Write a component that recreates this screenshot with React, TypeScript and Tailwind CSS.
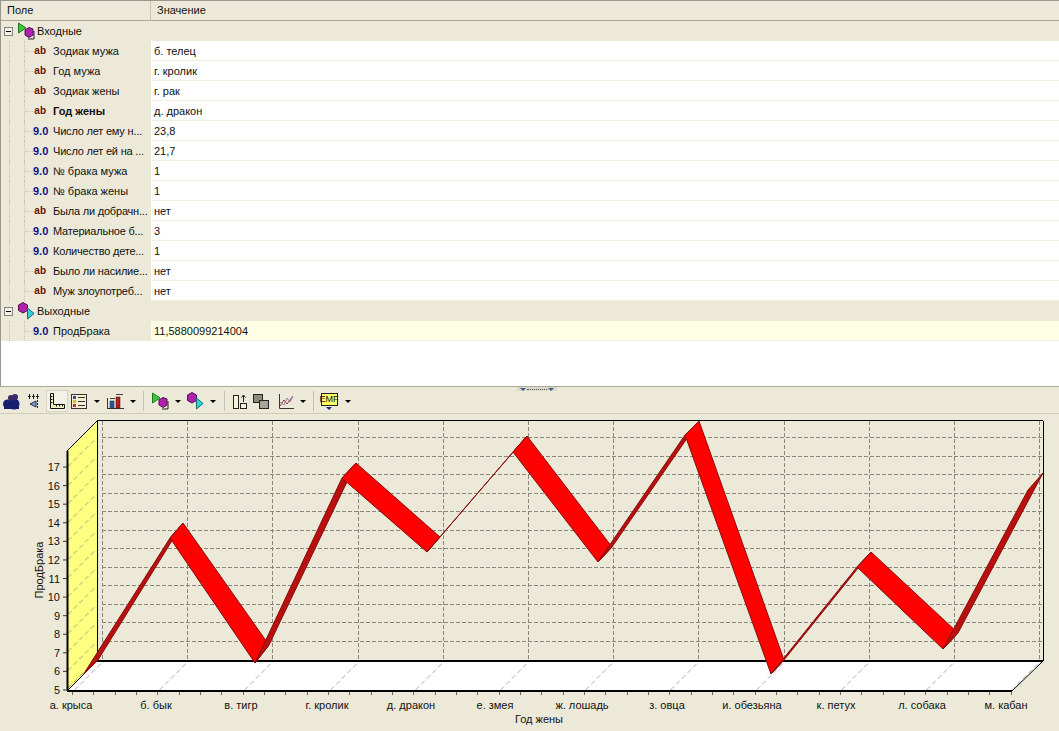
const INPUTS: [string, string, string, boolean?][] = [
  ['ab', 'Зодиак мужа', 'б. телец'],
  ['ab', 'Год мужа', 'г. кролик'],
  ['ab', 'Зодиак жены', 'г. рак'],
  ['ab', 'Год жены', 'д. дракон', true],
  ['9.0', 'Число лет ему н...', '23,8'],
  ['9.0', 'Число лет ей на ...', '21,7'],
  ['9.0', '№ брака мужа', '1'],
  ['9.0', '№ брака жены', '1'],
  ['ab', 'Была ли добрачн...', 'нет'],
  ['9.0', 'Материальное б...', '3'],
  ['9.0', 'Количество дете...', '1'],
  ['ab', 'Было ли насилие...', 'нет'],
  ['ab', 'Муж злоупотреб...', 'нет'],
];

// front and back edge of the ribbon at each category
const RIBBON = [
  [83, 675, 98, 660],
  [170, 538, 183, 523],
  [255, 663, 269, 645],
  [342, 478, 356, 463],
  [427, 552, 440, 537],
  [513, 452, 527, 436],
  [598, 562, 612, 547],
  [685, 435, 699, 421],
  [771, 674, 784, 660],
  [857, 567, 871, 552],
  [943, 649, 958, 633],
  [1028, 490, 1043, 473],
];

const LABELS: [string, number][] = [
  ['а. крыса', 71],
  ['б. бык', 156],
  ['в. тигр', 241],
  ['г. кролик', 327],
  ['д. дракон', 411],
  ['е. змея', 495],
  ['ж. лошадь', 582],
  ['з. овца', 667],
  ['и. обезьяна', 752],
  ['к. петух', 836],
  ['л. собака', 922],
  ['м. кабан', 1006],
];

const GRID_Y = Array.from({ length: 12 }, (_, i) => Math.round(437 + i * 18.5) + 0.5);
const GRID_X = Array.from({ length: 12 }, (_, i) => Math.round(102 + i * 85.2) + 0.5);
const TICKS_X = Array.from({ length: 45 }, (_, i) => Math.round(72 + i * 21.33) + 0.5);
const Y_LABELS = Array.from({ length: 13 }, (_, i) => 5 + i);

function InputsIcon() {
  return (
    <svg width="18" height="18" viewBox="0 0 18 18" className="shrink-0">
      <polygon points="1.500,1 1.500,11 9,6" fill="#3fc83f" stroke="#1c7a1c" />
      <polygon points="8,8 12,5.500 16,7 16,13 12,15.500 8,13" fill="#b021b0" stroke="#501050" />
      <path d="M17 9v8h-6" fill="none" stroke="#222" />
    </svg>
  );
}

function OutputsIcon() {
  return (
    <svg width="18" height="18" viewBox="0 0 18 18" className="shrink-0">
      <polygon points="1.500,3 6,0.500 10.500,3 10.500,8.500 6,11 1.500,8.500" fill="#b021b0" stroke="#501050" />
      <polygon points="10.500,6 10.500,17 17,11.500" fill="#35d0d0" stroke="#107070" />
    </svg>
  );
}

function Minus() {
  return (
    <div className="ml-[3px] flex h-[9px] w-[9px] shrink-0 items-center justify-center border border-[#808080] bg-[#f4f2e8]">
      <div className="h-px w-[5px] bg-black" />
    </div>
  );
}

function GroupRow({ title, icon }: { title: string; icon: React.ReactNode }) {
  return (
    <div className="flex h-5 items-center bg-[#ece9d8]">
      <Minus />
      <div className="ml-1">{icon}</div>
      <span className="ml-[2px]">{title}</span>
    </div>
  );
}

function FieldRow({ type, name, value, bold, bg }: { type: string; name: string; value: string; bold?: boolean; bg?: string }) {
  // the clipped names sit a little tighter so they stop short of the value column
  const nameClass = bold
    ? 'ml-[5px] font-bold whitespace-nowrap'
    : name.endsWith('...')
      ? 'ml-[5px] tracking-[-0.2px] whitespace-nowrap'
      : 'ml-[5px] whitespace-nowrap';
  return (
    <div className="flex h-5">
      <div className="flex w-[150px] shrink-0 items-center bg-[#ece9d8]">
        <div className="ml-[8px] h-full border-l border-dotted border-[#c4c1ae]" />
        <div className="ml-[14px] h-full border-l border-dotted border-[#c4c1ae]" />
        <div className="w-[8px] border-t border-dotted border-[#c4c1ae]" />
        <span
          className={
            type === 'ab'
              ? 'w-[15px] pr-[2px] text-right text-[10px] font-bold text-[#6e0c0c]'
              : 'w-[15px] text-right font-bold text-[#12128c]'
          }
        >
          {type}
        </span>
        <span className={nameClass}>{name}</span>
      </div>
      <div className={`flex flex-1 items-center pl-[3px] shadow-[inset_0_-1px_0_#f1efe2] ${bg ?? 'bg-white'}`}>{value}</div>
    </div>
  );
}

function Arrow() {
  return <div className="h-0 w-0 border-x-[3px] border-t-[3px] border-x-transparent border-t-black" />;
}

function Sep({ className }: { className: string }) {
  return <div className={`h-[20px] w-px bg-[#c5c2b0] ${className}`} />;
}

function Btn({ className, children }: { className: string; children: React.ReactNode }) {
  return <div className={`flex h-[22px] shrink-0 items-center justify-center ${className}`}>{children}</div>;
}

function Toolbar() {
  return (
    <div className="flex h-[25px] items-center border-b border-[#d0cdbb] bg-[#ece9d8]">
      <Btn className="w-[23px]">
        <svg width="17" height="17" viewBox="0 0 17 17" fill="#16206e">
          <circle cx="4.500" cy="11" r="4.500" />
          <circle cx="11" cy="11" r="5.500" />
          <circle cx="8" cy="5" r="3" fill="#3a2a6a" />
          <circle cx="12" cy="4" r="3" fill="#3a2a6a" />
          <rect x="1" y="11" width="15" height="5" />
        </svg>
      </Btn>
      <Btn className="w-[22px]">
        <svg width="14" height="16" viewBox="0 0 14 16" fill="none" stroke="#222">
          <path d="M2.500 1v5M6.500 1v5M10.500 1v14" strokeDasharray="2 1" />
          <path d="M1 3.500h3M5 3.500h3M9 3.500h3" />
          <polygon points="9,8 9,14 3,11" fill="#8aa0c8" stroke="#1c2a60" />
        </svg>
      </Btn>
      <Btn className="ml-px w-[22px] border border-[#d6d3c2] bg-[#f4f2e8]">
        <svg width="16" height="16" viewBox="0 0 16 16" fill="none" stroke="#111">
          <path d="M1.500 0.500h3v11h11v4h-14z" fill="#f2efc4" />
          <path d="M7.500 11.500v2M10.500 11.500v2M13.500 11.500v2M1.500 3.500h2M1.500 6.500h2M1.500 9.500h2" />
        </svg>
      </Btn>
      <Btn className="w-[22px]">
        <svg width="16" height="15" viewBox="0 0 16 15" fill="none" stroke="#333">
          <rect x="0.500" y="0.500" width="15" height="14" fill="#f3eed0" />
          <path d="M2 2h3v3H2z" fill="#3a4aa0" stroke="none" />
          <path d="M2 6h3v3H2z" fill="#d8c030" stroke="none" />
          <path d="M2 10h3v3H2z" fill="#c03030" stroke="none" />
          <path d="M7 3.500h7M7 7.500h7M7 11.500h7" />
        </svg>
      </Btn>
      <Btn className="w-[14px]"><Arrow /></Btn>
      <Btn className="w-[22px]">
        <svg width="17" height="16" viewBox="0 0 17 16">
          <path d="M0.500 15.500V5" stroke="#333" fill="none" />
          <path d="M0 15.500h17" stroke="#333" />
          <rect x="3" y="8" width="4" height="7" fill="#2a58a8" stroke="#123" strokeWidth="0.500" />
          <rect x="9" y="4" width="4" height="11" fill="#b52020" stroke="#411" strokeWidth="0.500" />
          <path d="M3 5.500h5M9 1.500h7" stroke="#444" fill="none" />
        </svg>
      </Btn>
      <Btn className="w-[14px]"><Arrow /></Btn>
      <Sep className="ml-[3px]" />
      <Btn className="ml-[5px] w-[22px]"><InputsIcon /></Btn>
      <Btn className="w-[14px]"><Arrow /></Btn>
      <Btn className="w-[20px]"><OutputsIcon /></Btn>
      <Btn className="ml-px w-[14px]"><Arrow /></Btn>
      <Sep className="ml-[4px]" />
      <Btn className="ml-[4px] w-[22px]">
        <svg width="14" height="15" viewBox="0 0 14 15" fill="none" stroke="#222">
          <rect x="0.500" y="1.500" width="5" height="13" fill="#f5f2dc" />
          <rect x="7.500" y="9.500" width="6" height="5" fill="#f5f2dc" />
          <path d="M10.500 8V1M8.500 3.500l2-2.500 2 2.500" />
        </svg>
      </Btn>
      <Btn className="w-[20px]">
        <svg width="16" height="15" viewBox="0 0 16 15" stroke="#222">
          <rect x="0.500" y="0.500" width="9" height="8" fill="#8c8a78" />
          <rect x="6.500" y="6.500" width="9" height="8" fill="#a8a692" />
        </svg>
      </Btn>
      <Btn className="ml-[3px] w-[24px]">
        <svg width="15" height="15" viewBox="0 0 15 15" fill="none">
          <path d="M0.500 0v14.500H15" stroke="#333" />
          <path d="M1 12l4-6 3 4 6-8" stroke="#b03030" />
          <path d="M1 8l4 3 3-7 3 4 3-6" stroke="#8a7fb0" />
        </svg>
      </Btn>
      <Btn className="w-[10px]"><Arrow /></Btn>
      <Sep className="ml-[5px]" />
      <Btn className="ml-[4px] w-[22px]">
        <div className="relative -mt-[3px] flex h-[13px] w-[17px] items-center justify-center border border-[#222] bg-[#ffff66] text-[9px] leading-none">
          EMF
          <div className="absolute -bottom-[5px] left-[4px] h-0 w-0 border-x-[3px] border-t-[3px] border-x-transparent border-t-[#222288]" />
        </div>
      </Btn>
      <Btn className="ml-px w-[14px]"><Arrow /></Btn>
    </div>
  );
}

function Chart() {
  return (
    <svg width="1059" height="317" viewBox="0 414 1059 317" className="block" fontFamily="'Liberation Sans', sans-serif" fontSize="11">
      {/* back wall grid */}
      {GRID_Y.map((y) => (
        <line key={y} x1="102" x2="1043" y1={y} y2={y} stroke="#8a887c" strokeDasharray="4 2" />
      ))}
      {GRID_X.map((x) => (
        <line key={x} x1={x} x2={x} y1="421" y2="660" stroke="#8a887c" strokeDasharray="4 2" />
      ))}

      {/* left wall */}
      <polygon points="67,691 97,661 97,421 67,451" fill="#ffff80" />
      {[...GRID_Y, 659].map((y) => (
        <line key={y} x1="68" x2="96" y1={y + 29} y2={y + 1} stroke="#a8a878" strokeDasharray="5 3" />
      ))}
      <line x1="67" x2="97" y1="451" y2="421" stroke="#000" />
      <line x1="97.500" x2="97.500" y1="421" y2="661" stroke="#000" />
      <line x1="67.500" x2="67.500" y1="451" y2="691" stroke="#000" strokeWidth="2" />

      {/* floor */}
      <polygon points="67,691 1012,691 1043,661 97,661" fill="#fff" />
      {GRID_X.map((x) => (
        <line key={x} x1={x - 28} x2={x} y1="690" y2="662" stroke="#aaa" strokeDasharray="5 3" />
      ))}
      <line x1="67" x2="97" y1="691" y2="661" stroke="#000" />
      <line x1="1012" x2="1043" y1="691" y2="661" stroke="#000" />
      <line x1="97" x2="1043" y1="420.500" y2="420.500" stroke="#000" />
      <line x1="1043.500" x2="1043.500" y1="421" y2="661" stroke="#000" />
      <line x1="97" x2="1043" y1="661" y2="661" stroke="#000" strokeWidth="2" />
      <line x1="67" x2="1012" y1="691" y2="691" stroke="#000" strokeWidth="2" />

      {/* ribbon */}
      {RIBBON.slice(0, -1).map((p, i) => {
        const n = RIBBON[i + 1];
        const falling = n[1] > p[1];
        return (
          <polygon
            key={i}
            points={`${p[0]},${p[1]} ${n[0]},${n[1]} ${n[2]},${n[3]} ${p[2]},${p[3]}`}
            fill={falling ? '#ff0000' : '#b80f0f'}
            stroke="#8a0c0c"
            strokeLinejoin="round"
          />
        );
      })}

      {/* axes */}
      {TICKS_X.map((x) => (
        <line key={x} x1={x} x2={x} y1="692" y2="695" stroke="#666" />
      ))}
      {Y_LABELS.map((v, i) => (
        <g key={v}>
          <line x1="63" x2="67" y1={690 - i * 18.58} y2={690 - i * 18.58} stroke="#333" />
          <text x="60" y={694 - i * 18.58} textAnchor="end" fill="#111">{v}</text>
        </g>
      ))}
      {LABELS.map(([t, x]) => (
        <text key={t} x={x} y="709" textAnchor="middle" fill="#111">{t}</text>
      ))}
      <text x="539" y="723" textAnchor="middle" fill="#111">Год жены</text>
      <text x="0" y="0" textAnchor="middle" fill="#111" transform="translate(43 570) rotate(-90)">ПродБрака</text>
    </svg>
  );
}

export default function App() {
  return (
    <div className="h-[731px] w-[1059px] overflow-hidden bg-[#ece9d8] font-['Liberation_Sans',sans-serif] text-[11px] leading-none text-[#111]">
      <div className="h-[386px] border-l border-t border-[#9a988c] bg-white">
        <div className="flex h-5 border-b border-[#aca899] bg-[#ece9d8]">
          <div className="flex w-[150px] items-center border-r border-[#c9c6b4] pl-[6px]">Поле</div>
          <div className="flex items-center pl-[6px]">Значение</div>
        </div>
        <GroupRow title="Входные" icon={<InputsIcon />} />
        {INPUTS.map(([type, name, value, bold]) => (
          <FieldRow key={name} type={type} name={name} value={value} bold={bold} />
        ))}
        <GroupRow title="Выходные" icon={<OutputsIcon />} />
        <FieldRow type="9.0" name="ПродБрака" value="11,5880099214004" bg="bg-[#ffffe6]" />
      </div>
      <div className="relative h-[3px] border-t border-[#aca899]">
        <div className="absolute left-[517px] top-0 flex h-[4px] w-[40px] items-center justify-between bg-[#dcd9c8] px-[3px]">
          <div className="h-0 w-0 border-x-[3px] border-t-[3px] border-x-transparent border-t-[#3a5a9a]" />
          <div className="w-[20px] border-t border-dotted border-[#555]" />
          <div className="h-0 w-0 border-x-[3px] border-t-[3px] border-x-transparent border-t-[#3a5a9a]" />
        </div>
      </div>
      <Toolbar />
      <Chart />
    </div>
  );
}
